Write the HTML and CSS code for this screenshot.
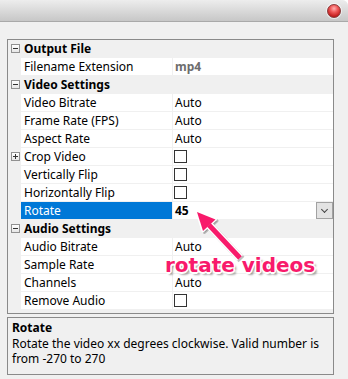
FILE: index.html
```html
<!DOCTYPE html>
<html lang="en">
<head>
  <meta charset="UTF-8" />
  <meta name="viewport" content="width=device-width, initial-scale=1.0" />
  <title>Video Settings</title>
  <link rel="stylesheet" href="styles.css">
</head>
<body>

  <div class="window">
    <div class="titlebar">
      <span class="close-btn"></span>
    </div>

    <div class="window-body">
      <div class="props">
        <div class="row category"><span class="gutter"><span class="toggle minus"></span></span><span class="cat-name">Output File</span></div>
        <div class="row"><span class="gutter"></span><span class="name">Filename Extension</span><span class="value readonly">mp4</span></div>

        <div class="row category"><span class="gutter"><span class="toggle minus"></span></span><span class="cat-name">Video Settings</span></div>
        <div class="row"><span class="gutter"></span><span class="name">Video Bitrate</span><span class="value">Auto</span></div>
        <div class="row"><span class="gutter"></span><span class="name">Frame Rate (FPS)</span><span class="value">Auto</span></div>
        <div class="row"><span class="gutter"></span><span class="name">Aspect Rate</span><span class="value">Auto</span></div>
        <div class="row"><span class="gutter"><span class="toggle plus"></span></span><span class="name">Crop Video</span><span class="value"><span class="check"></span></span></div>
        <div class="row"><span class="gutter"></span><span class="name">Vertically Flip</span><span class="value"><span class="check"></span></span></div>
        <div class="row"><span class="gutter"></span><span class="name">Horizontally Flip</span><span class="value"><span class="check"></span></span></div>
        <div class="row selected"><span class="gutter"></span><span class="name">Rotate</span><span class="value strong">45<span class="drop-btn"></span></span></div>

        <div class="row category"><span class="gutter"><span class="toggle minus"></span></span><span class="cat-name">Audio Settings</span></div>
        <div class="row"><span class="gutter"></span><span class="name">Audio Bitrate</span><span class="value">Auto</span></div>
        <div class="row"><span class="gutter"></span><span class="name">Sample Rate</span><span class="value"></span></div>
        <div class="row"><span class="gutter"></span><span class="name">Channels</span><span class="value">Auto</span></div>
        <div class="row"><span class="gutter"></span><span class="name">Remove Audio</span><span class="value"><span class="check"></span></span></div>
      </div>

      <div class="desc">
        <h3>Rotate</h3>
        <p>Rotate the video xx degrees clockwise. Valid number is from -270 to 270</p>
      </div>
    </div>

    <!-- annotation drawn on top of the screenshot -->
    <svg class="callout-arrow" width="348" height="379" viewBox="0 0 348 379">
      <g class="arrow-shadow" transform="translate(1.5 1.5)">
        <line x1="209" y1="225" x2="240" y2="258" />
        <polygon points="197,212 215.5,219.5 203,231" />
      </g>
      <g class="arrow-outline">
        <line x1="209" y1="225" x2="240" y2="258" />
        <polygon points="197,212 215.5,219.5 203,231" />
      </g>
      <g class="arrow-fill">
        <line x1="209" y1="225" x2="240" y2="258" />
        <polygon points="197,212 215.5,219.5 203,231" />
      </g>
    </svg>
    <div class="callout-text">rotate videos</div>
  </div>

</body>
</html>
```

FILE: styles.css
```css
* {
  box-sizing: border-box;
}

html {
  background-color: #fff;
}

body {
  margin: 0;
  font-family: "Noto Sans", "Open Sans", sans-serif;
  font-size: 12px;
  color: #000;
}

.window {
  position: relative;
  width: 348px;
  height: 379px;
  background-color: #f0f0f0;
  border-top-right-radius: 6px;
  overflow: hidden;
}

/* barra de titulo */
.titlebar {
  height: 22px;
  background: linear-gradient(#ededed, #c7c7c7);
  border-bottom: 1px solid #a9a9a9;
  display: flex;
  justify-content: flex-end;
  align-items: center;
  padding-right: 7px;
}

.close-btn {
  width: 14px;
  height: 14px;
  border-radius: 50%;
  border: 1px solid #8a3a3a;
  background: radial-gradient(circle at 50% 30%, #ffb0b0 0, #f05a5a 35%, #c21d1d 75%, #8e0f0f 100%);
  box-shadow: 0 0 0 1px rgba(255, 255, 255, 0.6);
}

.window-body {
  padding: 17px 0 0 7px;
}

/* grade de propriedades */
.props {
  width: 327px;
  border: 1px solid #8a8a8a;
  background-color: #f0f0f0;
  padding-bottom: 3px;
}

.row {
  display: flex;
  height: 18px;
  padding-bottom: 1px;
  line-height: 17px;
}

.gutter {
  width: 13px;
  flex-shrink: 0;
  display: flex;
  align-items: center;
  justify-content: center;
}

.name {
  width: 151px;
  margin-right: 1px;
  padding-left: 3px;
  background-color: #fff;
  white-space: nowrap;
}

.value {
  position: relative;
  flex: 1;
  padding-left: 2px;
  background-color: #fff;
  white-space: nowrap;
}

.value.readonly {
  color: #6d6d6d;
  font-weight: bold;
}

.value.strong {
  font-weight: bold;
}

.category {
  height: 18px;
  line-height: 18px;
}

.cat-name {
  padding-left: 3px;
  font-weight: bold;
}

.toggle {
  position: relative;
  width: 9px;
  height: 9px;
  border: 1px solid #919191;
  background: linear-gradient(#fff, #e6e6e6);
  margin-left: 1px;
}

.toggle::before,
.toggle.plus::after {
  content: "";
  position: absolute;
  background-color: #333;
}

.toggle::before {
  left: 1px;
  top: 3px;
  width: 5px;
  height: 1px;
}

.toggle.plus::after {
  left: 3px;
  top: 1px;
  width: 1px;
  height: 5px;
}

.selected .name {
  background-color: #0078d7;
  color: #fff;
}

.check {
  display: inline-block;
  width: 13px;
  height: 13px;
  margin: 2px 0 0 -1px;
  border: 1px solid #333;
  background-color: #fff;
  vertical-align: top;
}

.drop-btn {
  position: absolute;
  right: 0;
  top: 0;
  width: 17px;
  height: 17px;
  border: 1px solid #a2a2a2;
  background-color: #e3e3e3;
}

.drop-btn::after {
  content: "";
  position: absolute;
  left: 5px;
  top: 4px;
  width: 4px;
  height: 4px;
  border-right: 1px solid #444;
  border-bottom: 1px solid #444;
  transform: rotate(45deg);
}

/* caixa de descricao */
.desc {
  width: 327px;
  height: 58px;
  margin-top: 3px;
  border: 1px solid #8a8a8a;
  padding: 2px 4px 0;
}

.desc h3 {
  margin: 0;
  font-size: 12px;
  line-height: 16px;
}

.desc p {
  margin: 0;
  line-height: 15px;
}

/* anotacao */
.callout-arrow {
  position: absolute;
  left: 0;
  top: 0;
  pointer-events: none;
}

.callout-arrow line {
  stroke-width: 5px;
  stroke-linecap: butt;
}

.arrow-shadow line,
.arrow-shadow polygon {
  stroke: rgba(0, 0, 0, 0.25);
  fill: rgba(0, 0, 0, 0.25);
}

.arrow-shadow line {
  stroke-width: 8px;
}

.arrow-shadow polygon {
  stroke-width: 3px;
  stroke-linejoin: round;
}

.arrow-outline line {
  stroke: #fff;
  stroke-width: 8px;
}

.arrow-outline polygon {
  fill: #fff;
  stroke: #fff;
  stroke-width: 3px;
  stroke-linejoin: round;
}

.arrow-fill line {
  stroke: #f81a6b;
}

.arrow-fill polygon {
  fill: #f81a6b;
}

.callout-text {
  position: absolute;
  left: 165px;
  top: 255px;
  font-family: "DejaVu Sans", Verdana, sans-serif;
  font-weight: bold;
  font-size: 20px;
  line-height: 20px;
  color: #f81a6b;
  text-shadow:
    -1.5px 0 0 #fff, 1.5px 0 0 #fff, 0 -1.5px 0 #fff, 0 1.5px 0 #fff,
    -1px -1px 0 #fff, 1px -1px 0 #fff, -1px 1px 0 #fff, 1px 1px 0 #fff,
    2.5px 2.5px 2px rgba(0, 0, 0, 0.35);
}
```
